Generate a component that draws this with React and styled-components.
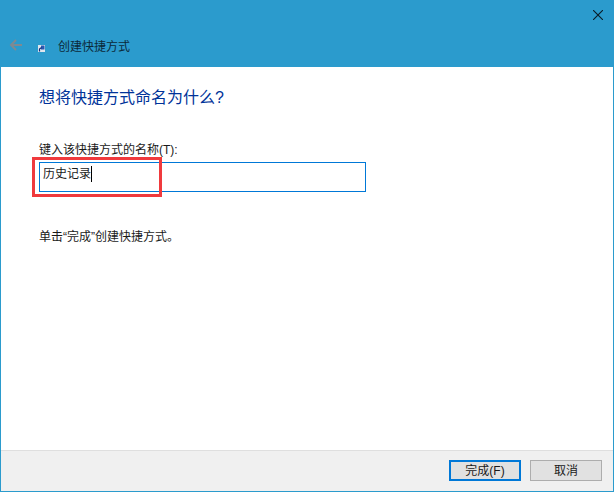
import React from 'react';
import styled, { createGlobalStyle } from 'styled-components';

const GlobalStyle = createGlobalStyle`
  html, body {
    margin: 0;
    padding: 0;
    background: #ffffff;
  }
  body {
    font-family: "Liberation Sans", "Noto Sans CJK SC", sans-serif;
  }
`;

const Wizard = styled.div`
  width: 614px;
  height: 492px;
  box-sizing: border-box;
  display: flex;
  flex-direction: column;
  border: 1px solid #2b9bcd;
  border-top: 0;
  background: #ffffff;
  overflow: hidden;
`;

const Header = styled.header`
  height: 67px;
  flex: none;
  background: #2b9bcd;
  display: flex;
  flex-direction: column;
`;

const TitleBar = styled.div`
  height: 30px;
  display: flex;
  justify-content: flex-end;
`;

const CloseButton = styled.div`
  width: 30px;
  height: 30px;
  display: flex;
  justify-content: center;
  padding-top: 10px;
  box-sizing: border-box;
`;

const NavRow = styled.div`
  display: flex;
  align-items: center;
  height: 30px;
  padding-left: 8px;
`;

const BackArrow = styled.svg`
  width: 14px;
  height: 14px;
  flex: none;
`;

const ShortcutIcon = styled.svg`
  width: 7px;
  height: 7px;
  flex: none;
  margin: 6px 0 0 15px;
`;

const WizardTitle = styled.span`
  margin: 3px 0 0 13px;
  font-size: 12px;
  color: #0c2a3a;
  line-height: 16px;
`;

const Body = styled.main`
  flex: 1;
  position: relative;
  display: flex;
  flex-direction: column;
  padding: 20px 0 0 38px;
`;

const Heading = styled.h1`
  margin: 0;
  font-size: 16px;
  font-weight: 400;
  line-height: 22px;
  color: #003399;
`;

const FieldLabel = styled.label`
  margin-top: 33px;
  font-size: 12px;
  line-height: 17px;
  color: #1a1a1a;
`;

const NameField = styled.div`
  margin-top: 3px;
  width: 327px;
  height: 30px;
  box-sizing: border-box;
  border: 1px solid #0078d7;
  display: flex;
  align-items: flex-start;
  padding: 3px 0 0 3px;
  font-size: 12px;
  line-height: 16px;
  color: #1a1a1a;
`;

const Caret = styled.span`
  display: inline-block;
  width: 1px;
  height: 16px;
  background: #000000;
`;

const Hint = styled.p`
  margin: 37px 0 0;
  font-size: 12px;
  line-height: 17px;
  color: #1a1a1a;
`;

const Highlight = styled.div`
  position: absolute;
  left: 31px;
  top: 90px;
  width: 130px;
  height: 40px;
  box-sizing: border-box;
  border: 3px solid #f03a3d;
`;

const Footer = styled.footer`
  height: 41px;
  flex: none;
  box-sizing: border-box;
  background: #f0f0f0;
  border-top: 1px solid #dfdfdf;
  display: flex;
  justify-content: flex-end;
  gap: 9px;
  padding: 9px 11px 0 0;
`;

const Button = styled.button`
  width: 72px;
  height: 21px;
  box-sizing: border-box;
  padding: 0;
  background: #e1e1e1;
  border: ${(p) => (p.$primary ? '2px solid #0078d7' : '1px solid #adadad')};
  font-family: inherit;
  font-size: 12px;
  line-height: 1;
  color: #1a1a1a;
`;

export default function App() {
  return (
    <>
      <GlobalStyle />
      <Wizard>
        <Header>
          <TitleBar>
            <CloseButton>
              <svg width="10" height="10" viewBox="0 0 10 10">
                <path d="M0 0L10 10M10 0L0 10" stroke="#0a1c26" strokeWidth="1.1" fill="none" />
              </svg>
            </CloseButton>
          </TitleBar>
          <NavRow>
            <BackArrow viewBox="0 0 14 14">
              <path d="M13 7H2M7 2L2 7l5 5" stroke="#7d8a93" strokeWidth="2" fill="none" />
            </BackArrow>
            <ShortcutIcon viewBox="0 0 7 7">
              <rect width="7" height="7" fill="#dfe6ee" />
              <rect x="3" y="0.5" width="3.5" height="4" fill="#2a58b0" />
              <path d="M1.5 6.5V4L3.5 2.5" stroke="#17307f" strokeWidth="1.2" fill="none" />
            </ShortcutIcon>
            <WizardTitle>创建快捷方式</WizardTitle>
          </NavRow>
        </Header>
        <Body>
          <Heading>想将快捷方式命名为什么?</Heading>
          <FieldLabel>键入该快捷方式的名称(T):</FieldLabel>
          <NameField>
            历史记录<Caret />
          </NameField>
          <Hint>单击“完成”创建快捷方式。</Hint>
          <Highlight />
        </Body>
        <Footer>
          <Button $primary>完成(F)</Button>
          <Button>取消</Button>
        </Footer>
      </Wizard>
    </>
  );
}
